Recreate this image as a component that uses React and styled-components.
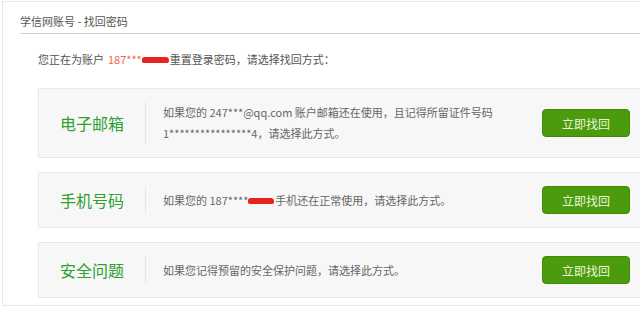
import React from "react";
import styled, { createGlobalStyle } from "styled-components";

const Global = createGlobalStyle`
  html, body { margin: 0; padding: 0; background: #ffffff; overflow: hidden; }
  body { font-family: "Microsoft YaHei", "Noto Sans CJK SC", "Noto Sans", sans-serif; }
`;

const Panel = styled.div`
  margin: 1px 0 0 2px;
  width: 720px;
  border: 1px solid #e2e7e7;
  padding: 0 0 7px 17px;
  box-sizing: border-box;
`;

const Header = styled.div`
  padding: 9px 0 2px;
  border-bottom: 1px solid #c9d4d2;
  font-size: 11px;
  line-height: 20px;
  color: #555;
`;

const Body = styled.div`
  padding-left: 18px;
`;

const Intro = styled.p`
  margin: 15px 0 19px;
  font-size: 11px;
  line-height: 20px;
  color: #555;
  display: flex;
  align-items: center;
`;

const Hl = styled.span`
  color: #f0694a;
  margin-left: 4px;
`;

const Blot = styled.span`
  display: inline-block;
  width: ${(p) => p.$w}px;
  height: 6px;
  background: #e8231f;
  border-radius: 3px 4px 3px 2px;
  margin: 1px 1px 0 0;
`;

const List = styled.div`
  display: flex;
  flex-direction: column;
  gap: 14px;
`;

const Card = styled.div`
  width: 620px;
  box-sizing: border-box;
  display: flex;
  align-items: center;
  background: #f7f7f7;
  border: 1px solid #e8e9e9;
  padding: 13px 27px 13px 0;
`;

const Label = styled.div`
  width: 106px;
  flex: none;
  text-align: center;
  font-size: 16px;
  color: #2f9f30;
  line-height: 24px;
`;

const Desc = styled.div`
  flex: 1;
  align-self: stretch;
  display: flex;
  align-items: center;
  border-left: 1px solid #e6e6e6;
  padding-left: 17px;
  font-size: 11px;
  line-height: 21px;
  color: #666;
`;

const Button = styled.button`
  flex: none;
  width: 88px;
  height: 28px;
  border: 1px solid #3f8a08;
  border-radius: 4px;
  background: #4b9b0c;
  color: #eaf6dc;
  font-family: inherit;
  font-size: 12px;
  cursor: pointer;
  padding: 0;
`;

const Inline = styled.span`
  display: inline-flex;
  align-items: center;
`;

export default function App() {
  return (
    <>
      <Global />
      <Panel>
        <Header>学信网账号 - 找回密码</Header>
        <Body>
          <Intro>
            您正在为账户<Hl>187***</Hl>
            <Blot $w={27} />
            重置登录密码，请选择找回方式：
          </Intro>
          <List>
            <Card>
              <Label>电子邮箱</Label>
              <Desc>
                <div>
                  如果您的 247***@qq.com 账户邮箱还在使用，且记得所留证件号码
                  <br />
                  1****************4，请选择此方式。
                </div>
              </Desc>
              <Button>立即找回</Button>
            </Card>
            <Card>
              <Label>手机号码</Label>
              <Desc>
                <Inline>
                  如果您的 187****
                  <Blot $w={26} />
                  手机还在正常使用，请选择此方式。
                </Inline>
              </Desc>
              <Button>立即找回</Button>
            </Card>
            <Card>
              <Label>安全问题</Label>
              <Desc>如果您记得预留的安全保护问题，请选择此方式。</Desc>
              <Button>立即找回</Button>
            </Card>
          </List>
        </Body>
      </Panel>
    </>
  );
}
